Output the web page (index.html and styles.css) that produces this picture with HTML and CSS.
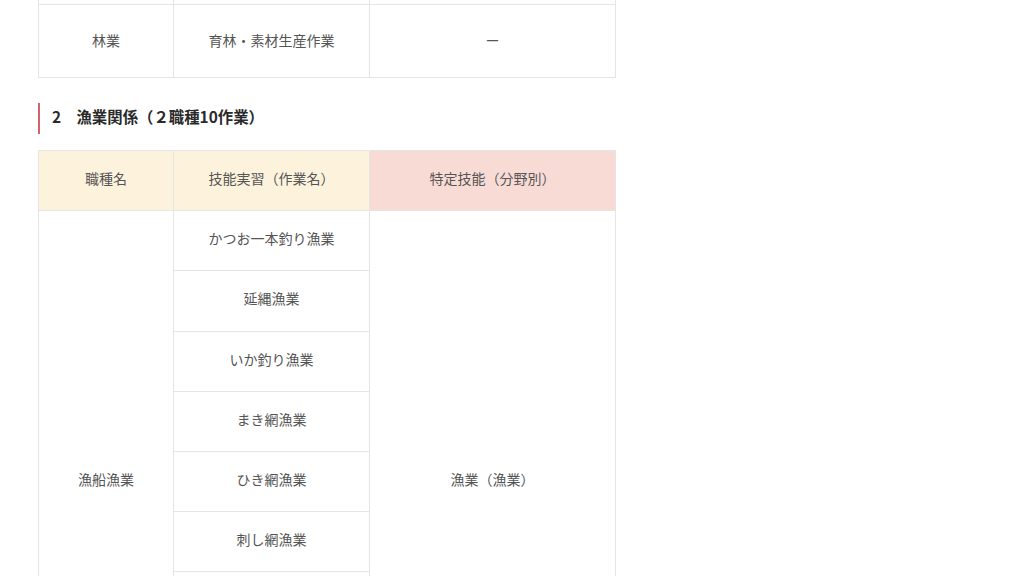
FILE: index.html
```html
<!DOCTYPE html>
<html lang="ja">
<head>
<meta charset="utf-8">
<link rel="stylesheet" href="styles.css">
</head>
<body>
<div class="page">
  <table class="grid grid-top">
    <colgroup><col class="c1"><col class="c2"><col class="c3"></colgroup>
    <tr class="stub"><td></td><td></td><td></td></tr>
    <tr class="tall"><td>林業</td><td>育林・素材生産作業</td><td>ー</td></tr>
  </table>

  <h2 class="sec-title">2　漁業関係（２職種10作業）</h2>

  <table class="grid">
    <colgroup><col class="c1"><col class="c2"><col class="c3"></colgroup>
    <tr class="head">
      <th class="h-yellow">職種名</th>
      <th class="h-yellow">技能実習（作業名）</th>
      <th class="h-pink">特定技能（分野別）</th>
    </tr>
    <tr><td rowspan="9">漁船漁業</td><td>かつお一本釣り漁業</td><td rowspan="9">漁業（漁業）</td></tr>
    <tr><td>延縄漁業</td></tr>
    <tr><td>いか釣り漁業</td></tr>
    <tr><td>まき網漁業</td></tr>
    <tr><td>ひき網漁業</td></tr>
    <tr><td>刺し網漁業</td></tr>
    <tr><td>定置網漁業</td></tr>
    <tr><td>えび籠漁業</td></tr>
    <tr><td>棒受網漁業</td></tr>
  </table>
</div>
</body>
</html>
```
FILE: styles.css
```css
html, body {
  margin: 0;
  padding: 0;
  background: #fff;
}
body {
  font-family: "Noto Sans CJK JP", "Noto Sans", sans-serif;
  color: #555;
}
.page {
  padding-left: 38px;
  width: 577px;
}
.grid {
  width: 577px;
  border-collapse: collapse;
  table-layout: fixed;
}
.c1 { width: 135px; }
.c2 { width: 196px; }
.c3 { width: 246px; }
.grid td, .grid th {
  border: 1px solid #e5e5e5;
  text-align: center;
  vertical-align: middle;
  font-size: 14px;
  font-weight: normal;
  padding: 0 8px 5px;
  height: 54.2px;
  line-height: 20px;
}
.grid-top .stub td {
  height: 4px;
  padding: 0;
  border-top: none;
}
.grid-top .tall td {
  height: 69px;
  padding-bottom: 3px;
}
.sec-title {
  margin: 25px 0 16px;
  padding: 2px 0 7px 12px;
  border-left: 2px solid #d0646f;
  font-size: 15.4px;
  font-weight: bold;
  color: #2a2a2a;
  line-height: 22px;
}
.h-yellow { background: #fdf3dd; }
.h-pink { background: #f9dbd6; }
```
